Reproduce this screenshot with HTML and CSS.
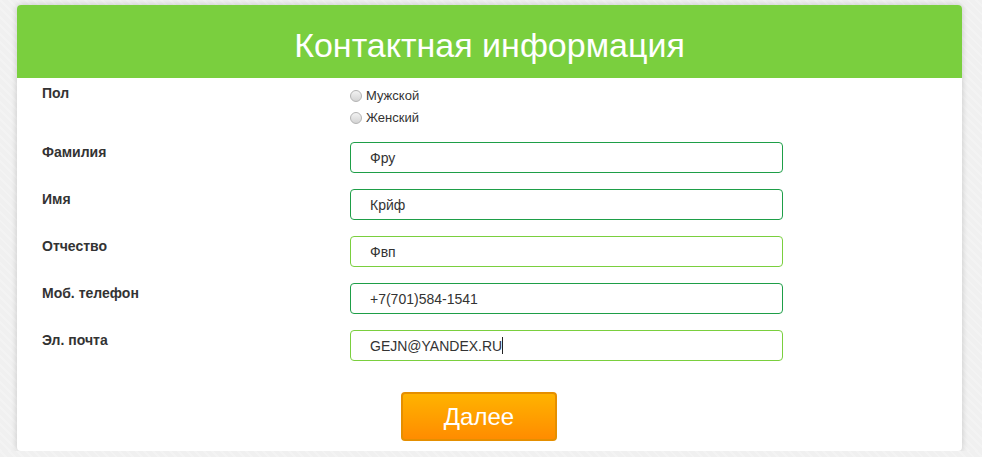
FILE: index.html
```html
<!DOCTYPE html>
<html lang="ru">
<head>
    <meta charset="UTF-8">
    <meta name="viewport" content="width=device-width, initial-scale=1.0">
    <title>Контактная информация</title>
    <link rel="stylesheet" href="styles.css">
</head>
<body>
    <div class="card">
        <div class="card-header">
            <h1 class="card-title">Контактная информация</h1>
        </div>

        <form class="card-body">
            <div class="form-row gender-row">
                <div class="field-label">Пол</div>
                <div class="radio-group">
                    <label class="radio"><input type="radio" name="gender"> Мужской</label>
                    <label class="radio"><input type="radio" name="gender"> Женский</label>
                </div>
            </div>

            <div class="form-row">
                <div class="field-label">Фамилия</div>
                <input class="text-input dark" type="text" value="Фру">
            </div>

            <div class="form-row">
                <div class="field-label">Имя</div>
                <input class="text-input dark" type="text" value="Крйф">
            </div>

            <div class="form-row">
                <div class="field-label">Отчество</div>
                <input class="text-input" type="text" value="Фвп">
            </div>

            <div class="form-row">
                <div class="field-label">Моб. телефон</div>
                <input class="text-input dark" type="text" value="+7(701)584-1541">
            </div>

            <div class="form-row">
                <div class="field-label">Эл. почта</div>
                <div class="text-input fake-input">GEJN@YANDEX.RU<span class="caret"></span></div>
            </div>

            <div class="actions">
                <button type="button" class="btn-next">Далее</button>
            </div>
        </form>
    </div>
</body>
</html>
```

FILE: styles.css
```css
body {
    margin: 0;
    font-family: Arial, "Liberation Sans", sans-serif;
    color: #333;
    background-color: #f0f0f0;
    background-image: repeating-linear-gradient(45deg, rgba(255,255,255,0.2) 0 2px, transparent 2px 6px);
}
.card {
    width: 945px;
    margin: 5px 0 0 17px;
    background-color: white;
    border-radius: 4px;
    box-shadow: 0 0 6px rgba(0, 0, 0, 0.18);
    overflow: hidden;
}
.card-header {
    background-color: #7acf3e;
    height: 73px;
}
.card-title {
    margin: 0;
    font-size: 34px;
    font-weight: normal;
    line-height: 80px;
    height: 73px;
    color: white;
    text-align: center;
}
.card-body {
    padding: 5px 25px 10px;
}
.form-row {
    display: flex;
    margin-bottom: 16px;
}
.gender-row {
    margin-bottom: 13px;
}
.field-label {
    width: 308px;
    font-size: 14px;
    font-weight: bold;
    line-height: 20px;
}
.radio-group {
    display: flex;
    flex-direction: column;
    padding-top: 2px;
}
.radio {
    display: flex;
    align-items: center;
    font-size: 13px;
    line-height: 22px;
    height: 22px;
}
.radio input {
    appearance: none;
    -webkit-appearance: none;
    width: 12px;
    height: 12px;
    margin: 0 4px 0 0;
    border: 1px solid #b3b3b3;
    border-radius: 50%;
    background: linear-gradient(#f2f2f2, #d4d4d4);
}
.text-input {
    box-sizing: border-box;
    width: 433px;
    height: 31px;
    padding: 0 19px;
    border: 1px solid #7acf3e;
    border-radius: 4px;
    font-family: Arial, "Liberation Sans", sans-serif;
    font-size: 14px;
    color: #333;
    outline: none;
}
.text-input.dark {
    border-color: #1e9e48;
}
.fake-input {
    display: flex;
    align-items: center;
}
.caret {
    display: inline-block;
    width: 1px;
    height: 17px;
    background-color: #222;
}
.actions {
    padding: 15px 0 0 359px;
}
.btn-next {
    width: 156px;
    height: 49px;
    border: 2px solid #e58f00;
    border-radius: 4px;
    background: linear-gradient(#ffb300, #ff8c00);
    color: white;
    font-family: Arial, "Liberation Sans", sans-serif;
    font-size: 24px;
    cursor: pointer;
}
```
